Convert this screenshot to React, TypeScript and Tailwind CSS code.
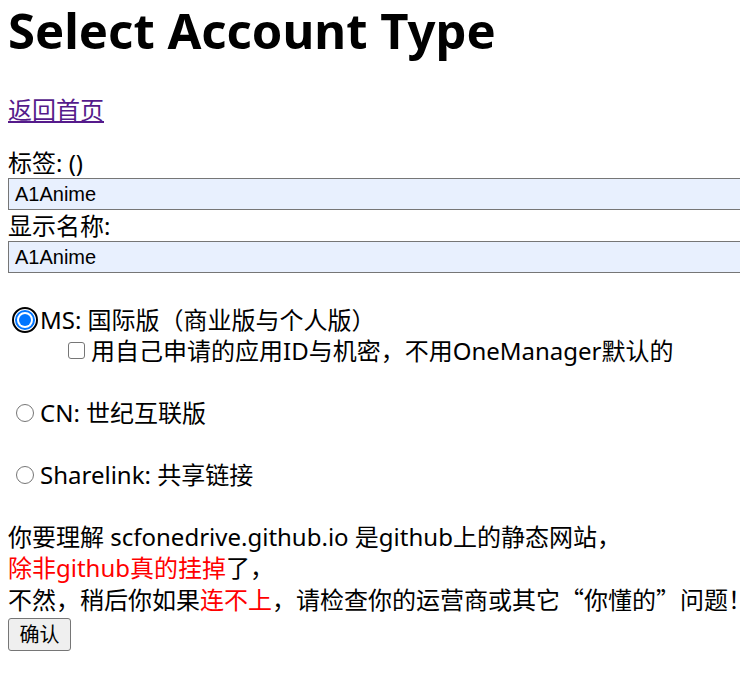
import React from 'react';

function Radio({ checked }: { checked?: boolean }) {
    if (checked) {
        return (
            <span className="mr-[2px] ml-[4px] inline-flex h-[26px] w-[26px] items-center justify-center rounded-full border-[2px] border-black align-middle">
                <span className="flex h-[20px] w-[20px] items-center justify-center rounded-full border-[2px] border-[#0075ff] bg-white">
                    <span className="h-[12px] w-[12px] rounded-full bg-[#0075ff]" />
                </span>
            </span>
        );
    }
    return (
        <span className="mr-[6px] ml-[8px] inline-block h-[18px] w-[18px] rounded-full border border-[#767676] bg-white align-middle" />
    );
}

export default function App() {
    const lh = 'leading-[31px]';
    const cjk = "font-['Noto_Sans_CJK_SC',sans-serif]";

    return (
        <div className="h-[687px] w-[740px] overflow-hidden bg-white font-['Noto_Sans','Noto_Sans_CJK_SC',sans-serif] text-[24px] text-black">
            <div className="pl-[8px]">
                <h1 className="m-0 pt-0 text-[49px] leading-[60px] font-bold whitespace-nowrap">Select Account Type</h1>

                <div className={`mt-[34px] ${lh}`}>
                    <a href="#" className="text-[#551a8b] underline">
                        返回首页
                    </a>
                </div>

                <div className={`mt-[22px] ${lh}`}>标签: ()</div>
                <div className="h-[32px] w-[800px] border border-[#767676] bg-[#e8f0fe] pl-[6px] font-['Liberation_Sans',sans-serif] text-[20px] leading-[30px]">
                    A1Anime
                </div>
                <div className={lh}>显示名称:</div>
                <div className="h-[32px] w-[800px] border border-[#767676] bg-[#e8f0fe] pl-[6px] font-['Liberation_Sans',sans-serif] text-[20px] leading-[30px]">
                    A1Anime
                </div>

                <div className="h-[31px]" />

                <div className={`${lh} flex items-center`}>
                    <Radio checked />
                    <span>MS: 国际版（商业版与个人版）</span>
                </div>
                <div className={`${lh} flex items-center pl-[60px]`}>
                    <span className="mr-[6px] inline-block h-[17px] w-[17px] rounded-[3px] border border-[#767676] bg-white" />
                    <span>用自己申请的应用ID与机密，不用OneManager默认的</span>
                </div>
                <div className="h-[31px]" />

                <div className={`${lh} flex items-center`}>
                    <Radio />
                    <span>CN: 世纪互联版</span>
                </div>
                <div className="h-[31px]" />

                <div className={`${lh} flex items-center`}>
                    <Radio />
                    <span>Sharelink: 共享链接</span>
                </div>
                <div className="h-[31px]" />

                <div className={`${lh} whitespace-nowrap`}>你要理解 scfonedrive.github.io 是github上的静态网站，</div>
                <div className={`${lh} whitespace-nowrap`}>
                    <span className="text-[#ff0000]">除非github真的挂掉</span>了，
                </div>
                <div className={`${lh} whitespace-nowrap`}>
                    不然，稍后你如果<span className="text-[#ff0000]">连不上</span>，请检查你的运营商或其它
                    <span className={`${cjk} inline-block w-[24px] text-right`}>“</span>你懂的
                    <span className={`${cjk} inline-block w-[24px] text-left`}>”</span>问题！
                </div>
                <button
                    type="button"
                    className="h-[33px] w-[63px] rounded-[3px] border border-[#767676] bg-[#efefef] text-[20px] leading-[31px]"
                >
                    确认
                </button>
            </div>
        </div>
    );
}
